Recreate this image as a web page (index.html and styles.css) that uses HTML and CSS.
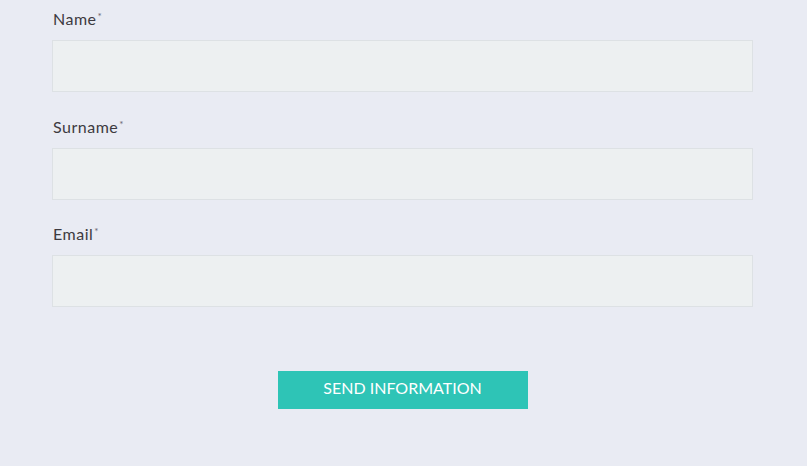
FILE: index.html
```html
<!DOCTYPE html>
<html lang="en">
<head>
    <meta charset="UTF-8">
    <meta name="viewport" content="width=device-width, initial-scale=1.0">
    <title>Contact Form</title>
    <link rel="stylesheet" href="styles.css">
</head>
<body>
    <form class="contact-form">
        <div class="field">
            <label for="name">Name<span class="req">*</span></label>
            <input type="text" id="name">
        </div>
        <div class="field">
            <label for="surname">Surname<span class="req">*</span></label>
            <input type="text" id="surname">
        </div>
        <div class="field">
            <label for="email">Email<span class="req">*</span></label>
            <input type="email" id="email">
        </div>
        <div class="actions">
            <button type="submit" class="send-btn">Send information</button>
        </div>
    </form>
</body>
</html>
```

FILE: styles.css
```css
/* Base Styles */
body {
    font-family: 'Lato', 'Open Sans', sans-serif;
    margin: 0;
    padding: 0;
    background-color: #e9ebf3;
    color: #3d3a40;
}

/* Form Layout */
.contact-form {
    width: 701px;
    margin-left: 52px;
    padding-top: 9px;
}

.field {
    margin-bottom: 24.5px;
}

.field label {
    display: block;
    font-size: 16px;
    line-height: 20px;
    letter-spacing: 0.5px;
    margin-bottom: 11px;
    padding-left: 1px;
}

.req {
    font-size: 10px;
    vertical-align: top;
    line-height: 14px;
    margin-left: 1px;
    color: #6b6670;
}

.field input {
    display: block;
    box-sizing: border-box;
    width: 100%;
    height: 52px;
    background-color: #edf0f1;
    border: 1px solid #dde1e4;
    outline: none;
    padding: 0 12px;
    font-family: inherit;
    font-size: 15px;
}

/* Button */
.actions {
    display: flex;
    justify-content: center;
    padding-top: 39px;
}

.send-btn {
    width: 250px;
    height: 38px;
    border: none;
    padding: 0 0 4px;
    background-color: #2ec4b6;
    color: white;
    font-family: inherit;
    font-size: 16px;
    text-transform: uppercase;
    cursor: pointer;
}
```
